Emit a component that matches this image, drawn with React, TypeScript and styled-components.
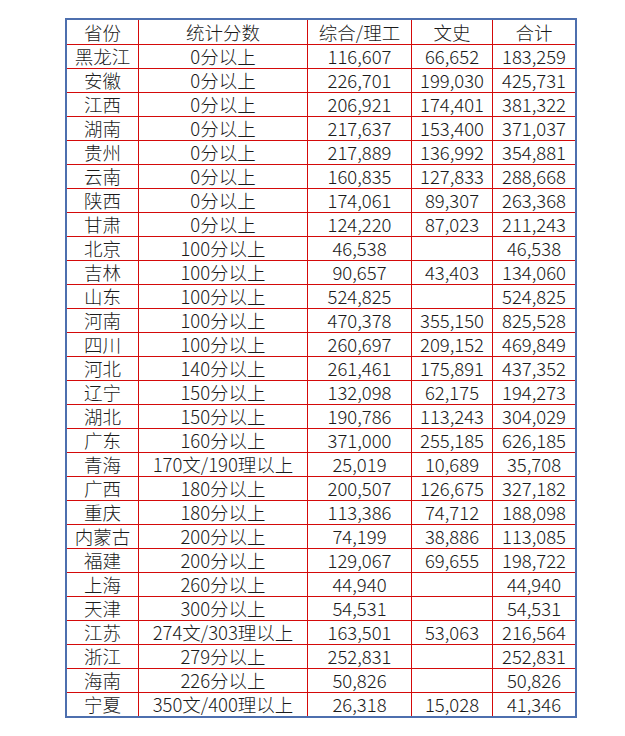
import styled, { createGlobalStyle } from "styled-components";

const GlobalStyle = createGlobalStyle`
  html, body {
    margin: 0;
    padding: 0;
    background: #ffffff;
  }
  body {
    font-family: "Noto Sans CJK SC", "Noto Sans", sans-serif;
  }
`;

const Page = styled.div`
  padding: 18px 0 0 65px;
`;

const Grid = styled.div`
  display: grid;
  grid-template-columns: 71px 168px 103px 80px 82px;
  grid-auto-rows: 23px;
  grid-template-rows: 24px;
  gap: 1px;
  width: fit-content;
  background: #d40a0a;
  border: 2px solid #4d6fae;
`;

const Cell = styled.div<{ head?: boolean }>`
  background: #ffffff;
  color: #1a1a1a;
  display: flex;
  align-items: center;
  justify-content: center;
  font-size: 18.5px;
  font-weight: 300;
  line-height: 1;
  white-space: nowrap;
  padding-top: ${(p) => (p.head ? "1px" : "0")};
`;

const headers = ["省份", "统计分数", "综合/理工", "文史", "合计"];

const rows: [string, string, string, string, string][] = [
  ["黑龙江", "0分以上", "116,607", "66,652", "183,259"],
  ["安徽", "0分以上", "226,701", "199,030", "425,731"],
  ["江西", "0分以上", "206,921", "174,401", "381,322"],
  ["湖南", "0分以上", "217,637", "153,400", "371,037"],
  ["贵州", "0分以上", "217,889", "136,992", "354,881"],
  ["云南", "0分以上", "160,835", "127,833", "288,668"],
  ["陕西", "0分以上", "174,061", "89,307", "263,368"],
  ["甘肃", "0分以上", "124,220", "87,023", "211,243"],
  ["北京", "100分以上", "46,538", "", "46,538"],
  ["吉林", "100分以上", "90,657", "43,403", "134,060"],
  ["山东", "100分以上", "524,825", "", "524,825"],
  ["河南", "100分以上", "470,378", "355,150", "825,528"],
  ["四川", "100分以上", "260,697", "209,152", "469,849"],
  ["河北", "140分以上", "261,461", "175,891", "437,352"],
  ["辽宁", "150分以上", "132,098", "62,175", "194,273"],
  ["湖北", "150分以上", "190,786", "113,243", "304,029"],
  ["广东", "160分以上", "371,000", "255,185", "626,185"],
  ["青海", "170文/190理以上", "25,019", "10,689", "35,708"],
  ["广西", "180分以上", "200,507", "126,675", "327,182"],
  ["重庆", "180分以上", "113,386", "74,712", "188,098"],
  ["内蒙古", "200分以上", "74,199", "38,886", "113,085"],
  ["福建", "200分以上", "129,067", "69,655", "198,722"],
  ["上海", "260分以上", "44,940", "", "44,940"],
  ["天津", "300分以上", "54,531", "", "54,531"],
  ["江苏", "274文/303理以上", "163,501", "53,063", "216,564"],
  ["浙江", "279分以上", "252,831", "", "252,831"],
  ["海南", "226分以上", "50,826", "", "50,826"],
  ["宁夏", "350文/400理以上", "26,318", "15,028", "41,346"],
];

export default function App() {
  return (
    <Page>
      <GlobalStyle />
      <Grid>
        {headers.map((h) => (
          <Cell key={h} head>
            {h}
          </Cell>
        ))}
        {rows.map((r) =>
          r.map((v, i) => <Cell key={r[0] + i}>{v}</Cell>)
        )}
      </Grid>
    </Page>
  );
}
